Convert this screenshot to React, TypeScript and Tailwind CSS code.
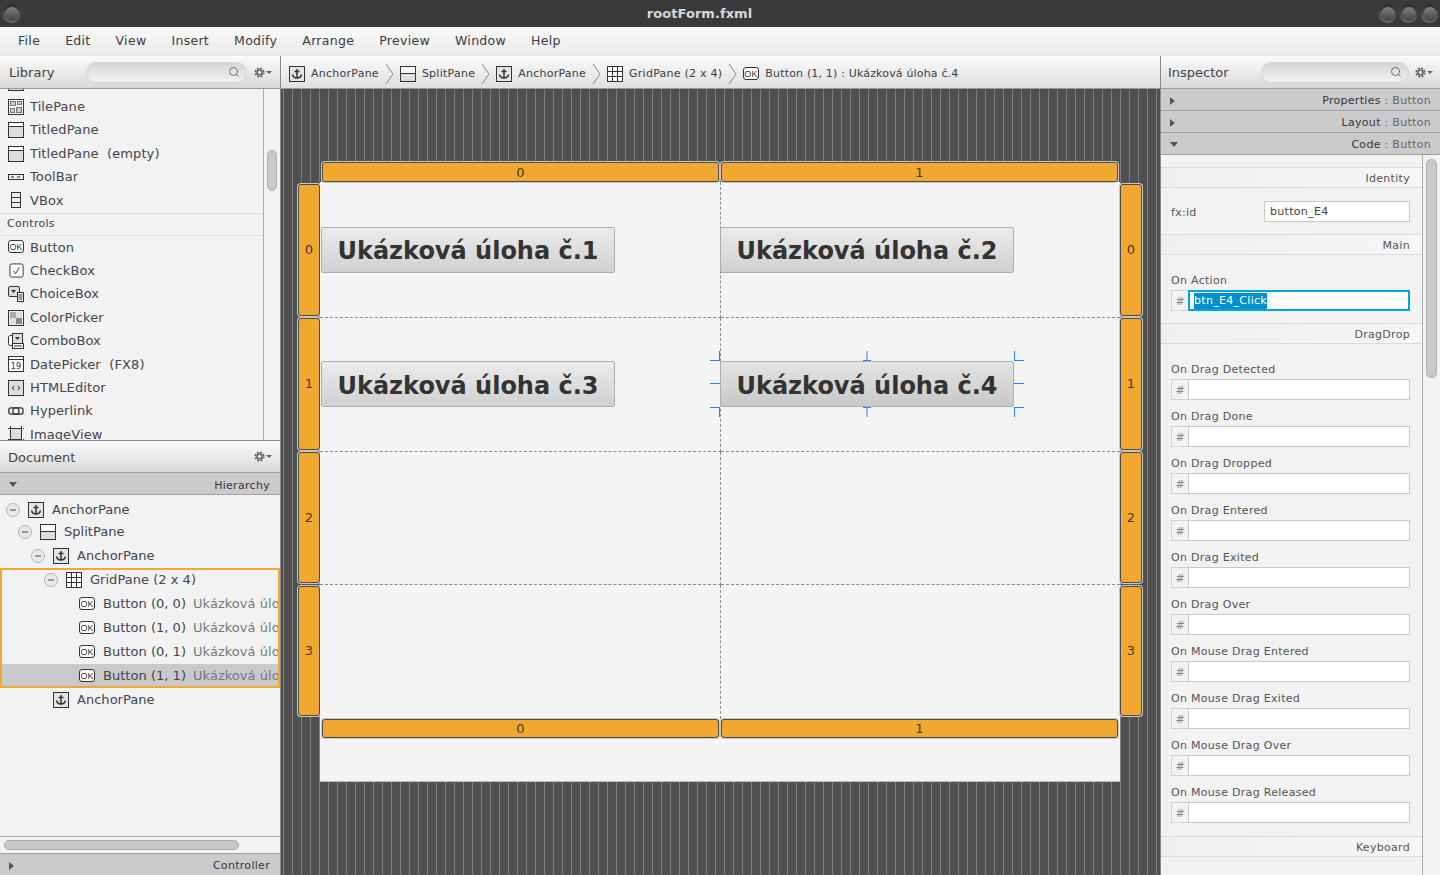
import type { ReactNode } from 'react'
import { Search } from 'lucide-react'

const stroke = '#333'

function Box({ children, size = 16 }: { children?: ReactNode; size?: number }) {
  return (
    <svg width={size} height={size} viewBox="0 0 16 16" fill="none" stroke={stroke} strokeWidth="1" className="shrink-0">
      {children}
    </svg>
  )
}

const AnchorIcon = () => (
  <Box>
    <rect x="0.5" y="0.5" width="15" height="15" fill="#e4e4e4" />
    <path d="M8 3v9M5.500 5.500h5M3.500 8.500c.5 2.500 2.500 3.500 4.500 3.500s4-1 4.500-3.500" strokeWidth="1.500" />
  </Box>
)
const SplitIcon = () => (
  <Box>
    <rect x="0.5" y="0.5" width="15" height="15" fill="#fff" />
    <rect x="1" y="8" width="14" height="7" fill="#ddd" stroke="none" />
    <path d="M0 7.500h16" />
  </Box>
)
const GridIcon = () => (
  <Box>
    <rect x="0.5" y="0.5" width="15" height="15" fill="#fff" />
    <path d="M5.500 0v16M10.500 0v16M0 5.500h16M0 10.500h16" />
  </Box>
)
const OkIcon = () => (
  <svg width="16" height="13" viewBox="0 0 16 13" fill="none" className="shrink-0 -mt-px">
    <rect x="0.5" y="0.5" width="15" height="12" rx="2.500" stroke={stroke} fill="#fff" />
    <text x="8" y="9.800" textAnchor="middle" fontSize="9" fontFamily="Liberation Sans" fill={stroke}>OK</text>
  </svg>
)
const TileIcon = () => (
  <Box>
    <rect x="0.5" y="0.5" width="15" height="15" fill="#f6f6f6" />
    <rect x="2.500" y="2.500" width="5" height="4" fill="#ccc" stroke="#777" />
    <rect x="9.500" y="2.500" width="4" height="3" fill="#ccc" stroke="#777" />
    <rect x="2.500" y="9.500" width="4" height="4" fill="#ccc" stroke="#777" />
    <rect x="8.500" y="8.500" width="5" height="5" fill="#ccc" stroke="#777" />
  </Box>
)
const TitledIcon = () => (
  <Box>
    <rect x="0.5" y="0.5" width="15" height="15" fill="#ddd" />
    <rect x="1" y="1" width="14" height="3" fill="#fff" stroke="none" />
    <path d="M0 4.500h16" />
  </Box>
)
const ToolBarIcon = () => (
  <svg width="16" height="6" viewBox="0 0 16 6" fill="none" className="shrink-0">
    <rect x="0.5" y="0.5" width="15" height="5" fill="#eee" stroke={stroke} />
    <rect x="3" y="2" width="3" height="2" fill="#888" />
    <rect x="9" y="2" width="3" height="2" fill="#888" />
  </svg>
)
const VBoxIcon = () => (
  <Box>
    <rect x="3.500" y="0.5" width="9" height="15" fill="#eee" />
    <path d="M3 5.500h10M3 10.500h10" />
  </Box>
)
const CheckIcon = () => (
  <Box size={15}>
    <rect x="1" y="1" width="14" height="14" rx="2" fill="#fff" />
    <path d="M5 8.500l2 3 4-7" />
  </Box>
)
const ChoiceIcon = () => (
  <Box>
    <rect x="0.5" y="0.5" width="11" height="10" rx="1.500" fill="#ddd" />
    <path d="M3 4h5l-2.500 3z" fill="#333" stroke="none" />
    <rect x="9.500" y="6.500" width="6" height="9" fill="#fff" />
    <path d="M10.500 9h4M10.500 11h4M10.500 13h4" />
  </Box>
)
const ColorIcon = () => (
  <Box>
    <rect x="0.5" y="0.5" width="15" height="15" fill="#eee" />
    <rect x="2" y="2" width="6" height="6" fill="#aaa" stroke="none" />
    <rect x="8" y="2" width="6" height="6" fill="#ddd" stroke="none" />
    <rect x="2" y="8" width="6" height="6" fill="#ddd" stroke="none" />
    <rect x="8" y="8" width="6" height="6" fill="#888" stroke="none" />
  </Box>
)
const ComboIcon = () => (
  <Box>
    <rect x="0.5" y="2.500" width="8" height="10" rx="2" fill="#fff" />
    <rect x="4.500" y="0.500" width="10" height="10" fill="#ddd" />
    <path d="M7 4h5l-2.500 3z" fill="#333" stroke="none" />
    <rect x="4.500" y="10.500" width="11" height="5" fill="#fff" />
    <path d="M6 13h8" />
  </Box>
)
const DateIcon = () => (
  <svg width="16" height="16" viewBox="0 0 16 16" fill="none" className="shrink-0">
    <rect x="0.5" y="0.5" width="15" height="15" fill="#fff" stroke={stroke} />
    <path d="M0 3.500h16" stroke={stroke} />
    <text x="8" y="13" textAnchor="middle" fontSize="8" fontFamily="DejaVu Sans" fill={stroke}>19</text>
  </svg>
)
const HtmlIcon = () => (
  <svg width="16" height="16" viewBox="0 0 16 16" fill="none" className="shrink-0">
    <rect x="0.5" y="0.5" width="15" height="15" fill="#ddd" stroke={stroke} />
    <path d="M6.500 6l-2.500 2 2.500 2M9.500 6l2.500 2-2.500 2" stroke={stroke} />
  </svg>
)
const LinkIcon = () => (
  <svg width="16" height="8" viewBox="0 0 16 8" fill="none" className="shrink-0">
    <rect x="0.8" y="0.8" width="10" height="6.400" rx="2" stroke={stroke} strokeWidth="1.300" />
    <rect x="5" y="0.8" width="10" height="6.400" rx="2" stroke={stroke} strokeWidth="1.300" />
  </svg>
)
const ImageIcon = () => (
  <Box>
    <rect x="2.500" y="2.500" width="11" height="11" fill="#ddd" />
    <path d="M0 2.500h16M0 13.500h16M2.500 0v16M13.500 0v16" strokeDasharray="2 1" />
  </Box>
)

function Gear() {
  return (
    <span className="flex items-center gap-[1px] shrink-0">
      <svg width="11" height="11" viewBox="0 0 11 11" fill="none" stroke="#666">
        <circle cx="5.500" cy="5.500" r="2.500" strokeWidth="1.600" />
        <circle cx="5.500" cy="5.500" r="4.200" strokeWidth="1.800" strokeDasharray="2 1.300" />
      </svg>
      <span className="w-0 h-0 border-x-[3px] border-x-transparent border-t-[3px] border-t-[#666]" />
    </span>
  )
}

function Triangle({ open = false }: { open?: boolean }) {
  return open ? (
    <span className="w-0 h-0 border-x-[4px] border-x-transparent border-t-[5px] border-t-[#555]" />
  ) : (
    <span className="w-0 h-0 border-y-[4px] border-y-transparent border-l-[5px] border-l-[#555]" />
  )
}

function SearchField({ width }: { width: string }) {
  return (
    <div className={`h-[21px] ${width} rounded-full border border-[#d4d4d4] bg-gradient-to-b from-[#d6d6d6] to-[#f2f2f2] flex items-center justify-end pr-[6px]`}>
      <Search size={12} color="#555" strokeWidth={1.6} />
    </div>
  )
}

function WinButton() {
  return (
    <span className="w-[19px] h-[19px] rounded-full bg-gradient-to-b from-[#2a2a2a] to-[#6a6a6a] flex items-center justify-center">
      <span className="w-[14px] h-[14px] rounded-full bg-gradient-to-b from-[#808080] to-[#444]" />
    </span>
  )
}

const libraryRows: { icon: ReactNode; label: string }[] = [
  { icon: <TileIcon />, label: 'TilePane' },
  { icon: <TitledIcon />, label: 'TitledPane' },
  { icon: <TitledIcon />, label: 'TitledPane\u00a0 (empty)' },
  { icon: <ToolBarIcon />, label: 'ToolBar' },
  { icon: <VBoxIcon />, label: 'VBox' },
]

const controlRows: { icon: ReactNode; label: string }[] = [
  { icon: <OkIcon />, label: 'Button' },
  { icon: <CheckIcon />, label: 'CheckBox' },
  { icon: <ChoiceIcon />, label: 'ChoiceBox' },
  { icon: <ColorIcon />, label: 'ColorPicker' },
  { icon: <ComboIcon />, label: 'ComboBox' },
  { icon: <DateIcon />, label: 'DatePicker\u00a0 (FX8)' },
  { icon: <HtmlIcon />, label: 'HTMLEditor' },
  { icon: <LinkIcon />, label: 'Hyperlink' },
  { icon: <ImageIcon />, label: 'ImageView' },
]

function LibraryRow({ icon, label }: { icon?: ReactNode; label?: string }) {
  return (
    <div className="h-[23.4px] shrink-0 flex items-center pl-[8px] text-[13px] text-[#444450] tracking-[0.1px]">
      <span className="w-[16px] flex justify-center">{icon}</span>
      <span className="ml-[6px] whitespace-nowrap">{label}</span>
    </div>
  )
}

function Minus() {
  return (
    <span className="w-[14px] h-[14px] rounded-full border border-[#b4b4b4] bg-[#e8e8e8] flex items-center justify-center shrink-0">
      <span className="w-[6px] h-[2px] bg-[#999]" />
    </span>
  )
}

function TreeRow({ left, minus, icon, label, gap = 8, sub, selected }: { left: number; minus?: boolean; icon: ReactNode; label: string; gap?: number; sub?: string; selected?: boolean }) {
  return (
    <div className={`h-[24px] flex items-center overflow-hidden text-[13px] tracking-[0.03px] text-[#444450] whitespace-nowrap ${selected ? 'bg-[#c9c9c9]' : ''}`}>
      <span className="shrink-0" style={{ width: left }} />
      {minus && <span className="mr-[8px]"><Minus /></span>}
      {icon}
      <span className="shrink-0" style={{ marginLeft: gap }}>{label}</span>
      {sub && <span className="ml-[7px] text-[#777]">{sub}</span>}
    </div>
  )
}

function Crumb({ icon, label, className = '' }: { icon: ReactNode; label: string; className?: string }) {
  return (
    <div className={`flex items-center gap-[6px] whitespace-nowrap ${className}`}>
      {icon}
      <span>{label}</span>
    </div>
  )
}

function Chevron() {
  return (
    <svg width="9" height="20" viewBox="0 0 9 20" fill="none" stroke="#888" className="mx-[6px] shrink-0">
      <path d="M1 0l7 10-7 10" />
    </svg>
  )
}

function BarRow({ title, open }: { title: string; open?: boolean }) {
  return (
    <div className="h-[22px] shrink-0 bg-[#cbcbcb] border-b border-[#a0a0a0] flex items-center justify-between pl-[9px] pr-[9px] pt-[2px] text-[11px] tracking-[0.3px]">
      <Triangle open={open} />
      <span className="text-[#3c3044] pt-[2px]">{title}<span className="text-[#666]"> : Button</span></span>
    </div>
  )
}

function SectionHead({ title }: { title: string }) {
  return (
    <div className="h-[21px] shrink-0 border-y border-[#dcdcdc] bg-gradient-to-r from-[#efefef] to-[#f6f6f6] flex items-center justify-end pr-[12px] pt-[4px] text-[11px] tracking-[0.3px] text-[#555]">
      {title}
    </div>
  )
}

function EventField({ label }: { label: string }) {
  return (
    <div className="pt-[10px] pl-[10px] pr-[12px]">
      <div className="h-[14px] leading-[14px] text-[11px] tracking-[0.3px] text-[#555]">{label}</div>
      <div className="mt-[2px] h-[21px] flex">
        <span className="w-[17px] shrink-0 border border-r-0 border-[#d0d0d0] flex items-center justify-center pt-[3px] text-[11px] text-[#888]">#</span>
        <span className="flex-1 border border-[#c8c8c8] bg-white" />
      </div>
    </div>
  )
}

const dragEvents = ['On Drag Detected', 'On Drag Done', 'On Drag Dropped', 'On Drag Entered', 'On Drag Exited', 'On Drag Over', 'On Mouse Drag Entered', 'On Mouse Drag Exited', 'On Mouse Drag Over', 'On Mouse Drag Released']

function RulerCell({ label, className }: { label: string; className: string }) {
  return (
    <div className={`bg-[#f0a830] border border-[#4c4c4c] shadow-[0_0_0_1px_#c8c8c8] flex items-center justify-center text-[13px] text-[#4a3a20] ${className}`}>
      {label}
    </div>
  )
}

function SideRuler() {
  return (
    <div className="w-[22px] shrink-0 mt-[22px] flex flex-col gap-[2px]">
      <RulerCell label="0" className="h-[132px] rounded-[3px]" />
      <RulerCell label="1" className="h-[132px] rounded-[3px]" />
      <RulerCell label="2" className="h-[131px] rounded-[3px]" />
      <RulerCell label="3" className="h-[130px] rounded-[3px] mt-[1px]" />
    </div>
  )
}

function ColRuler({ className, cell = '' }: { className: string; cell?: string }) {
  return (
    <div className={`flex gap-[2px] pl-[2px] pr-[2px] ${className}`}>
      <RulerCell label="0" className={`flex-1 rounded-[3px] ${cell}`} />
      <RulerCell label="1" className={`flex-1 rounded-[3px] ${cell}`} />
    </div>
  )
}

function SceneButton({ label, selected, className = '' }: { label: string; selected?: boolean; className?: string }) {
  return (
    <div className={`relative w-[294px] h-[46px] rounded-[2px] border border-[#adadad] bg-gradient-to-b flex items-center justify-center pt-[3px] text-[24px] font-bold text-[#333] whitespace-nowrap ${selected ? 'from-[#e4e4e4] to-[#c8c8c8]' : 'from-[#ececec] to-[#d0d0d0]'} ${className}`}>
      {label}
      {selected && (
        <svg width="314" height="66" viewBox="0 0 314 66" fill="none" stroke="#2f80f0" className="absolute -left-[11px] -top-[11px]">
          <path d="M0 9.500H10M9.500 0V10M157 0V9.500M153 9.500H161M304 9.500H314M304.500 0V10M0 32.500H10M304 32.500H314M0 56.500H10M9.500 56V66M157 56V66M153 56.500H161M304 56.500H314M304.500 56V66" />
        </svg>
      )}
    </div>
  )
}

function Cell({ children, right, last }: { children?: ReactNode; right?: boolean; last?: boolean }) {
  return (
    <div className={`flex items-center border-dashed border-[#8a8a8a] ${right ? '' : 'border-r pl-[1px]'} ${last ? '' : 'border-b'}`}>
      {children}
    </div>
  )
}

export default function App() {
  return (
    <div className="w-[1440px] h-[875px] overflow-hidden flex flex-col bg-[#f2f2f2] font-['DejaVu_Sans',sans-serif]">
      {/* title bar */}
      <div className="h-[27px] shrink-0 bg-[#3a3a3c] flex items-center pl-[2px] pr-[1px]">
        <WinButton />
        <div className="flex-1 text-center text-[13px] font-bold tracking-[0.05px] text-[#d8d8d8]">rootForm.fxml</div>
        <div className="flex gap-[2px]"><WinButton /><WinButton /><WinButton /></div>
      </div>

      {/* menu */}
      <div className="h-[29px] shrink-0 bg-gradient-to-b from-[#fbfbfb] to-[#e8e8e8] flex items-center gap-[25px] pl-[18px] text-[12.5px] tracking-[0.3px] text-[#3c3c44]">
        {['File', 'Edit', 'View', 'Insert', 'Modify', 'Arrange', 'Preview', 'Window', 'Help'].map((m) => (
          <span key={m}>{m}</span>
        ))}
      </div>

      <div className="flex-1 flex min-h-0">
        {/* left column */}
        <div className="w-[281px] shrink-0 flex flex-col border-r border-[#8a8a8a]">
          <div className="h-[33px] shrink-0 bg-gradient-to-b from-[#fbfbfb] to-[#d9d9d9] border-b border-[#9a9a9a] flex items-center pl-[9px] pr-[8px] text-[13px] text-[#444]">
            <span className="w-[78px] pt-[2px]">Library</span>
            <SearchField width="w-[163px]" />
            <span className="ml-[7px]"><Gear /></span>
          </div>
          <div className="h-[352px] shrink-0 flex overflow-hidden border-b border-[#8a8a8a]">
            <div className="w-[264px] shrink-0 border-r border-[#aaa] flex flex-col -mt-[17.3px]">
              <LibraryRow icon={<TitledIcon />} />
              {libraryRows.map((r) => <LibraryRow key={r.label} {...r} />)}
              <div className="h-[22.6px] shrink-0 border-y border-[#dedede] flex items-center pl-[7px] text-[11px] tracking-[0.3px] text-[#444] mt-[1px]">Controls</div>
              {controlRows.map((r) => <LibraryRow key={r.label} {...r} />)}
            </div>
            <div className="flex-1 pl-[3px] pt-[61px]">
              <div className="w-[10px] h-[41px] rounded-[5px] bg-[#c8c8c8] border border-[#b0b0b0]" />
            </div>
          </div>

          <div className="h-[32px] shrink-0 bg-gradient-to-b from-[#fbfbfb] to-[#d9d9d9] border-b border-[#9a9a9a] flex items-center justify-between pl-[8px] pr-[8px] text-[13px] text-[#444]">
            <span className="pt-[2px]">Document</span>
            <Gear />
          </div>
          <div className="h-[22px] shrink-0 bg-[#cbcbcb] border-b border-[#a0a0a0] flex items-center justify-between pl-[9px] pr-[10px] pt-[2px] text-[11px] tracking-[0.3px] text-[#3c3044]">
            <Triangle open />
            <span className="pt-[4px]">Hierarchy</span>
          </div>
          <div className="flex-1 min-h-0 pt-[3px]">
            <TreeRow left={6} minus icon={<AnchorIcon />} label="AnchorPane" />
            <div className="-mt-[2px]"><TreeRow left={18} minus icon={<SplitIcon />} label="SplitPane" /></div>
            <TreeRow left={31} minus icon={<AnchorIcon />} label="AnchorPane" />
            <div className="outline-2 -outline-offset-2 outline-[#f0a830]">
              <TreeRow left={44} minus icon={<GridIcon />} label="GridPane (2 x 4)" />
              <TreeRow left={79} icon={<OkIcon />} label="Button (0, 0)" sub="Ukázková úloha č.1" />
              <TreeRow left={79} icon={<OkIcon />} label="Button (1, 0)" sub="Ukázková úloha č.2" />
              <TreeRow left={79} icon={<OkIcon />} label="Button (0, 1)" sub="Ukázková úloha č.3" />
              <TreeRow left={79} icon={<OkIcon />} label="Button (1, 1)" sub="Ukázková úloha č.4" selected />
            </div>
            <TreeRow left={53} icon={<AnchorIcon />} label="AnchorPane" />
          </div>
          <div className="h-[17px] shrink-0 border-t border-[#aaa] pl-[4px] pt-[3px]">
            <div className="w-[235px] h-[10px] rounded-[5px] bg-[#c8c8c8] border border-[#aaa]" />
          </div>
          <div className="h-[22px] shrink-0 bg-[#cbcbcb] border-t border-[#a0a0a0] flex items-center justify-between pl-[9px] pr-[10px] pt-[2px] text-[11px] tracking-[0.3px] text-[#3c3044]">
            <Triangle />
            <span className="pt-[2px]">Controller</span>
          </div>
        </div>

        {/* center */}
        <div className="flex-1 min-w-0 flex flex-col">
          <div className="h-[33px] shrink-0 bg-gradient-to-b from-[#fbfbfb] to-[#e0e0e0] border-b border-[#9a9a9a] flex items-center pl-[8px] pt-[4px] text-[11px] tracking-[0.25px] text-[#3c3c44]">
            <Crumb icon={<AnchorIcon />} label="AnchorPane" />
            <Chevron />
            <Crumb icon={<SplitIcon />} label="SplitPane" />
            <Chevron />
            <Crumb icon={<AnchorIcon />} label="AnchorPane" />
            <Chevron />
            <Crumb icon={<GridIcon />} label="GridPane (2 x 4)" />
            <Chevron />
            <Crumb icon={<OkIcon />} label="Button (1, 1) : Ukázková úloha č.4" className="tracking-[0.17px]" />
          </div>
          <div className="flex-1 min-h-0 flex pl-[17px] pt-[73px] bg-[image:repeating-linear-gradient(90deg,transparent_0,transparent_2px,#7e7e7e_2px,#7e7e7e_3px,transparent_3px,transparent_9px),repeating-conic-gradient(#484848_0_25%,#585858_0_50%)] bg-size-[auto,2px_2px]">
            <SideRuler />
            <div className="w-[800px] shrink-0">
              <ColRuler className="h-[20px]" cell="pt-[2px]" />
              <div className="h-[600px] bg-[#f4f4f4] border-b border-[#bbb]">
                <div className="grid grid-cols-[401px_399px] grid-rows-[136px_134px_133px_134px]">
                  <Cell><SceneButton label="Ukázková úloha č.1" /></Cell>
                  <Cell right><SceneButton label="Ukázková úloha č.2" className="-ml-px" /></Cell>
                  <Cell><SceneButton label="Ukázková úloha č.3" className="mb-px" /></Cell>
                  <Cell right><SceneButton label="Ukázková úloha č.4" selected className="-ml-px mb-px" /></Cell>
                  <Cell />
                  <Cell right />
                  <Cell last />
                  <Cell right last />
                </div>
                <ColRuler className="h-[19px]" />
              </div>
            </div>
            <SideRuler />
          </div>
        </div>

        {/* inspector */}
        <div className="w-[280px] shrink-0 flex flex-col border-l border-[#8a8a8a]">
          <div className="h-[33px] shrink-0 bg-gradient-to-b from-[#fbfbfb] to-[#d9d9d9] border-b border-[#9a9a9a] flex items-center pl-[7px] pr-[7px] text-[13px] text-[#444]">
            <span className="w-[93px] pt-[2px]">Inspector</span>
            <SearchField width="w-[149px]" />
            <span className="ml-[6px]"><Gear /></span>
          </div>
          <BarRow title="Properties" />
          <BarRow title="Layout" />
          <BarRow title="Code" open />
          <div className="flex-1 min-h-0 flex overflow-hidden">
            <div className="w-[262px] shrink-0 border-r border-[#aaa] pt-[12px]">
              <SectionHead title="Identity" />
              <div className="mt-[13px] h-[21px] flex items-center pl-[10px] pr-[12px] text-[11px] tracking-[0.3px] text-[#555]">
                <span className="w-[93px] pt-[3px]">fx:id</span>
                <span className="flex-1 h-full border border-[#c8c8c8] bg-white flex items-center pl-[5px] pt-[2px] text-[#444]">button_E4</span>
              </div>
              <div className="h-[12px]" />
              <SectionHead title="Main" />
              <div className="pt-[10px] pl-[10px] pr-[12px]">
                <div className="mt-[9px] h-[14px] leading-[14px] text-[11px] tracking-[0.3px] text-[#555]">On Action</div>
                <div className="mt-[2px] h-[21px] flex">
                  <span className="w-[17px] shrink-0 border border-r-0 border-[#d0d0d0] flex items-center justify-center pt-[3px] text-[11px] text-[#888]">#</span>
                  <span className="flex-1 border-2 border-[#00a6e4] bg-white flex items-center pl-[4px] pt-px text-[11px] tracking-[0.3px]">
                    <span className="bg-[#0090cc] text-white">btn_E4_Click</span>
                  </span>
                </div>
              </div>
              <div className="h-[12px]" />
              <SectionHead title="DragDrop" />
              <div className="h-[9px]" />
              {dragEvents.map((e) => <EventField key={e} label={e} />)}
              <div className="h-[13px]" />
              <SectionHead title="Keyboard" />
            </div>
            <div className="flex-1 pl-[3px] pt-[4px]">
              <div className="w-[11px] h-[219px] rounded-[5px] bg-[#c8c8c8] border border-[#b0b0b0]" />
            </div>
          </div>
        </div>
      </div>
    </div>
  )
}
